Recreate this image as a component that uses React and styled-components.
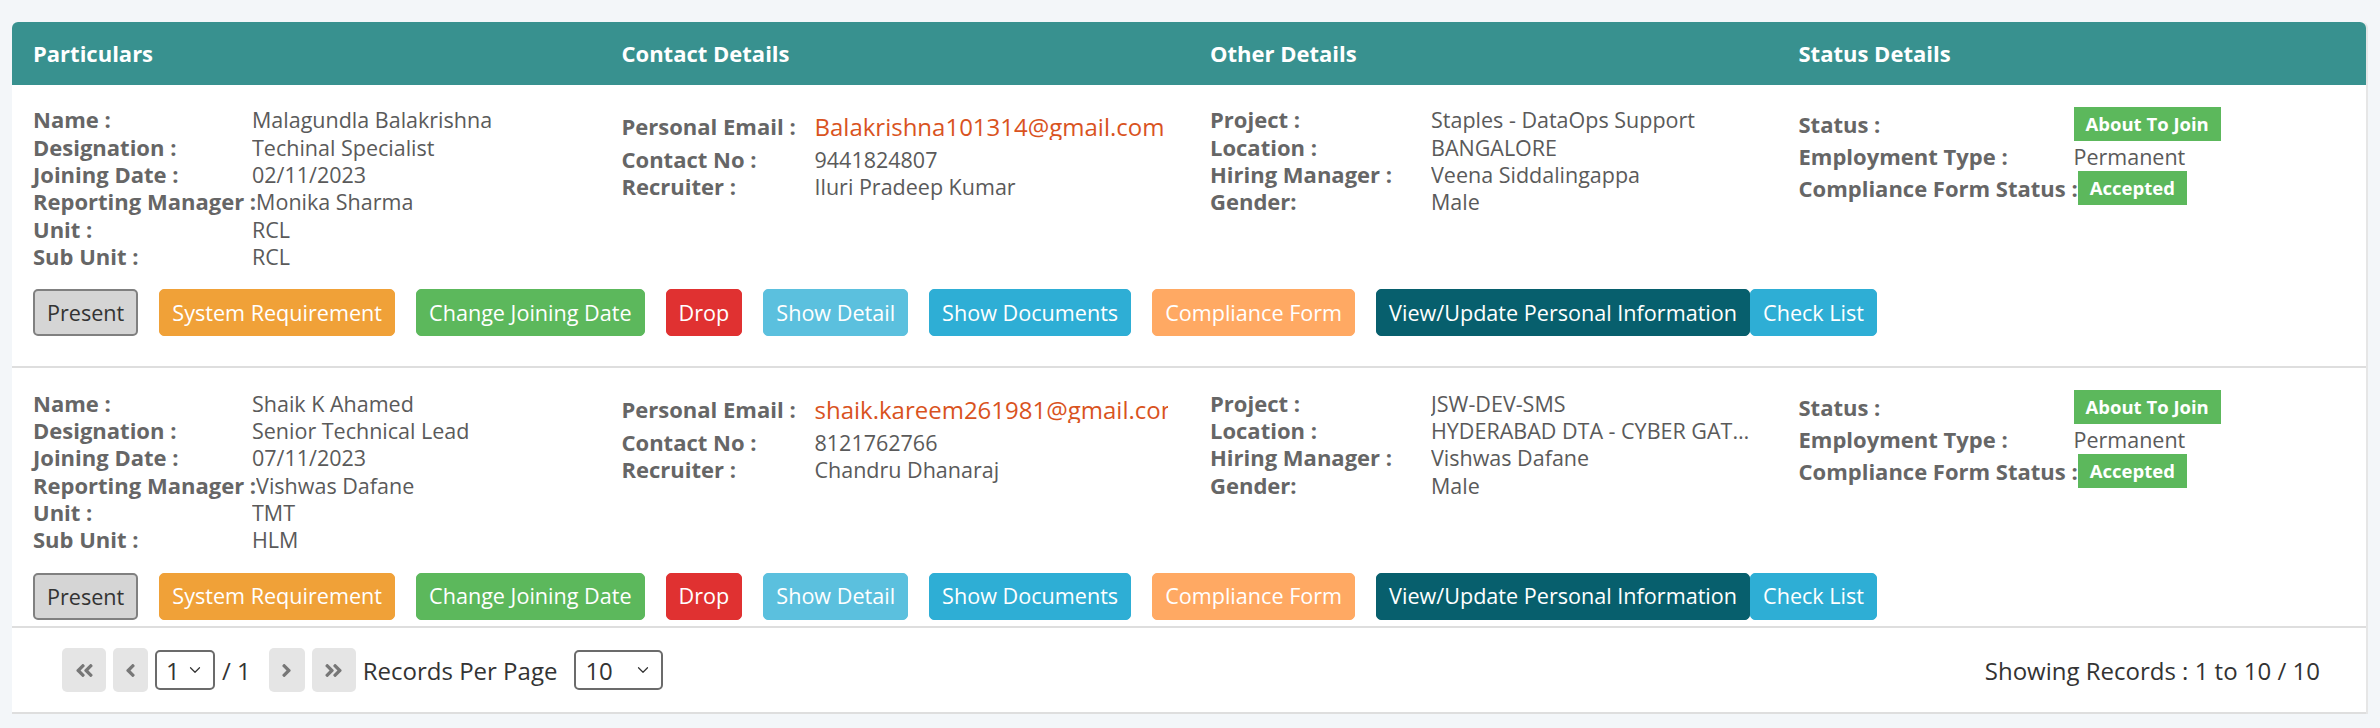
import React from 'react';
import styled, { createGlobalStyle } from 'styled-components';
import { FaAngleDoubleLeft, FaAngleLeft, FaAngleRight, FaAngleDoubleRight } from 'react-icons/fa';
import { ChevronDown } from 'lucide-react';

const GlobalStyle = createGlobalStyle`
  body {
    margin: 0;
    background: #f3f6f9;
    font-family: "Open Sans", "Noto Sans", sans-serif;
    font-size: 21.5px;
    line-height: 27px;
    color: #555;
  }
  * { box-sizing: border-box; }
`;

const Page = styled.div`
  padding: 22px 12px 0;
`;

const Card = styled.div`
  background: #fff;
  border-radius: 6px 6px 0 0;
  border-right: 2px solid #e6e6e6;
`;

const HeaderBar = styled.div`
  display: grid;
  grid-template-columns: repeat(4, 1fr);
  align-items: center;
  height: 63px;
  background: #38918f;
  border-radius: 6px 6px 0 0;
`;

const HeaderCell = styled.div`
  padding: 0 21px;
  color: #fff;
  font-weight: 700;
  font-size: 22px;
`;

const ListArea = styled.div`
  height: 541px;
  overflow: hidden;
`;

const Record = styled.div`
  padding: 21px 0 30px;
  border-bottom: 2px solid #dedede;
`;

const Columns = styled.div`
  display: grid;
  grid-template-columns: repeat(4, 1fr);
  align-items: start;
`;

const Column = styled.div`
  padding: 0 21px;
  min-width: 0;
  margin-top: ${p => p.$offset || 0}px;
`;

const Field = styled.div`
  display: flex;
  align-items: center;
  min-height: ${p => p.$h}px;
`;

const Label = styled.div`
  flex: 0 0 ${p => p.$w}px;
  font-weight: 700;
  font-size: 22px;
  color: #666;
  white-space: nowrap;
`;

const Value = styled.div`
  flex: 1;
  min-width: 0;
  color: #5a5a5a;
  white-space: nowrap;
  overflow: hidden;
  text-overflow: ellipsis;
`;

const Email = styled(Value)`
  color: #d9531e;
  font-size: 24px;
  text-overflow: clip;
`;

const Badge = styled.span`
  display: inline-block;
  background: #5cb85c;
  color: #fff;
  font-weight: 700;
  font-size: 18.5px;
  line-height: 34px;
  padding: 0 12px;
`;

const ButtonRow = styled.div`
  display: flex;
  margin-top: 19px;
  padding: 0 21px;
`;

const ActionButton = styled.button`
  font-family: inherit;
  font-size: 21.6px;
  line-height: 32px;
  padding: 6px 12px;
  border: 1.5px solid ${p => p.$bg};
  border-radius: 5px;
  background: ${p => p.$bg};
  color: #fff;
  margin-right: ${p => (p.$joined ? 0 : 21)}px;
  white-space: nowrap;
`;

const PresentButton = styled(ActionButton)`
  background: #d5d5d5;
  border: 2px solid #808080;
  color: #333;
  line-height: 31px;
`;

const Footer = styled.div`
  display: flex;
  justify-content: space-between;
  align-items: center;
  height: 88px;
  padding: 0 46px 0 50px;
  border-top: 2px solid #dedede;
  border-bottom: 2px solid #dedede;
`;

const Pager = styled.div`
  display: flex;
  align-items: center;
  gap: 7px;
`;

const PageButton = styled.div`
  width: ${p => p.$w}px;
  height: 44px;
  border-radius: 5px;
  background: #e5e5e5;
  color: #777;
  display: flex;
  align-items: center;
  justify-content: center;
`;

const SelectBox = styled.div`
  width: ${p => p.$w}px;
  height: 40px;
  border: 2px solid #6b6b6b;
  border-radius: 5px;
  display: flex;
  align-items: center;
  justify-content: space-between;
  padding: 0 9px;
  color: #333;
  font-size: 24px;
  background: #fff;
`;

const PagerText = styled.span`
  color: #333;
  font-size: 24px;
  margin-right: ${p => p.$mr || 0}px;
`;

const Showing = styled.div`
  color: #333;
  font-size: 24px;
`;

const records = [
  {
    name: 'Malagundla Balakrishna',
    designation: 'Techinal Specialist',
    joining: '02/11/2023',
    manager: 'Monika Sharma',
    unit: 'RCL',
    subUnit: 'RCL',
    email: 'Balakrishna101314@gmail.com',
    contact: '9441824807',
    recruiter: 'Iluri Pradeep Kumar',
    project: 'Staples - DataOps Support',
    location: 'BANGALORE',
    hiring: 'Veena Siddalingappa',
    gender: 'Male',
  },
  {
    name: 'Shaik K Ahamed',
    designation: 'Senior Technical Lead',
    joining: '07/11/2023',
    manager: 'Vishwas Dafane',
    unit: 'TMT',
    subUnit: 'HLM',
    email: 'shaik.kareem261981@gmail.com',
    contact: '8121762766',
    recruiter: 'Chandru Dhanaraj',
    project: 'JSW-DEV-SMS',
    location: 'HYDERABAD DTA - CYBER GATEWAY',
    hiring: 'Vishwas Dafane',
    gender: 'Male',
  },
];

const actions = [
  { text: 'System Requirement', bg: '#f0a138' },
  { text: 'Change Joining Date', bg: '#5cb85c' },
  { text: 'Drop', bg: '#e03131' },
  { text: 'Show Detail', bg: '#5bc0de' },
  { text: 'Show Documents', bg: '#2eaed5' },
  { text: 'Compliance Form', bg: '#ffa963' },
  { text: 'View/Update Personal Information', bg: '#075f6d', joined: true },
  { text: 'Check List', bg: '#2eaed5' },
];

const RecordRow = ({ r }) => (
  <Record>
    <Columns>
      <Column>
        <Field $h={27.4}><Label $w={219}>Name :</Label><Value>{r.name}</Value></Field>
        <Field $h={27.4}><Label $w={219}>Designation :</Label><Value>{r.designation}</Value></Field>
        <Field $h={27.4}><Label $w={219}>Joining Date :</Label><Value>{r.joining}</Value></Field>
        <Field $h={27.4}><Label $w={219}>Reporting Manager :</Label><Value>{r.manager}</Value></Field>
        <Field $h={27.4}><Label $w={219}>Unit :</Label><Value>{r.unit}</Value></Field>
        <Field $h={27.4}><Label $w={219}>Sub Unit :</Label><Value>{r.subUnit}</Value></Field>
      </Column>
      <Column>
        <Field $h={40}><Label $w={193}>Personal Email :</Label><Email>{r.email}</Email></Field>
        <Field $h={27}><Label $w={193}>Contact No :</Label><Value>{r.contact}</Value></Field>
        <Field $h={27}><Label $w={193}>Recruiter :</Label><Value>{r.recruiter}</Value></Field>
      </Column>
      <Column>
        <Field $h={27.4}><Label $w={221}>Project :</Label><Value>{r.project}</Value></Field>
        <Field $h={27.4}><Label $w={221}>Location :</Label><Value>{r.location}</Value></Field>
        <Field $h={27.4}><Label $w={221}>Hiring Manager :</Label><Value>{r.hiring}</Value></Field>
        <Field $h={27.4}><Label $w={221}>Gender:</Label><Value>{r.gender}</Value></Field>
      </Column>
      <Column $offset={1}>
        <Field $h={34}><Label $w={275}>Status :</Label><Value><Badge>About To Join</Badge></Value></Field>
        <Field $h={30}><Label $w={275}>Employment Type :</Label><Value>Permanent</Value></Field>
        <Field $h={34}><Label $w={275}>Compliance Form Status :</Label><Value><Badge>Accepted</Badge></Value></Field>
      </Column>
    </Columns>
    <ButtonRow>
      <PresentButton $bg="#d5d5d5">Present</PresentButton>
      {actions.map(a => (
        <ActionButton key={a.text} $bg={a.bg} $joined={a.joined}>{a.text}</ActionButton>
      ))}
    </ButtonRow>
  </Record>
);

const App = () => {
  return (
    <Page>
      <GlobalStyle />
      <Card>
        <HeaderBar>
          <HeaderCell>Particulars</HeaderCell>
          <HeaderCell>Contact Details</HeaderCell>
          <HeaderCell>Other Details</HeaderCell>
          <HeaderCell>Status Details</HeaderCell>
        </HeaderBar>
        <ListArea>
          {records.map(r => <RecordRow key={r.email} r={r} />)}
        </ListArea>
        <Footer>
          <Pager>
            <PageButton $w={44}><FaAngleDoubleLeft size={21} /></PageButton>
            <PageButton $w={35}><FaAngleLeft size={21} /></PageButton>
            <SelectBox $w={60}><span>1</span><ChevronDown size={18} strokeWidth={1.6} /></SelectBox>
            <PagerText $mr={11}>/ 1</PagerText>
            <PageButton $w={36}><FaAngleRight size={21} /></PageButton>
            <PageButton $w={44}><FaAngleDoubleRight size={21} /></PageButton>
            <PagerText $mr={10}>Records Per Page</PagerText>
            <SelectBox $w={89}><span>10</span><ChevronDown size={18} strokeWidth={1.6} /></SelectBox>
          </Pager>
          <Showing>Showing Records : 1 to 10 / 10</Showing>
        </Footer>
      </Card>
    </Page>
  );
};

export default App;
